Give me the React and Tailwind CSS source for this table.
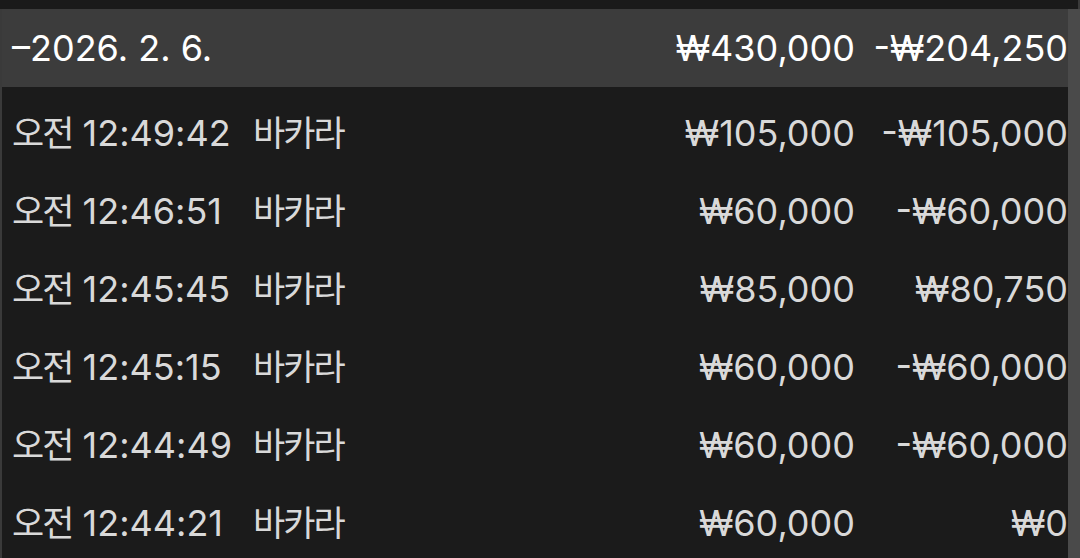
const rows = [
  { time: '12:49:42', game: '바카라', bet: '₩105,000', net: '-₩105,000' },
  { time: '12:46:51', game: '바카라', bet: '₩60,000', net: '-₩60,000' },
  { time: '12:45:45', game: '바카라', bet: '₩85,000', net: '₩80,750' },
  { time: '12:45:15', game: '바카라', bet: '₩60,000', net: '-₩60,000' },
  { time: '12:44:49', game: '바카라', bet: '₩60,000', net: '-₩60,000' },
  { time: '12:44:21', game: '바카라', bet: '₩60,000', net: '₩0' },
];

// hangul in the reference font is narrower than Noto CJK, so squeeze it a bit
function Ko({ children }) {
  return <span className="text-[35px] tracking-[-2px]">{children}</span>;
}

export default function App() {
  return (
    <div
      className="w-[1080px] h-[558px] overflow-hidden bg-[#1b1b1b] flex flex-col text-[36px]"
      style={{ fontFamily: 'Inter, "Noto Sans CJK KR", sans-serif' }}
    >
      <div className="h-[9px] shrink-0 flex">
        <div className="flex-1 bg-[#1a1a1a]" />
        <div className="w-[2px] bg-[#3a3a3a]" />
      </div>
      <div className="flex flex-1 min-h-0">
        <div className="w-[2px] bg-[#3a3a3a] shrink-0" />
        <div className="flex-1 flex flex-col min-w-0">
          <div className="h-[78px] shrink-0 bg-[#3c3c3c] flex items-center pl-[10px] text-white">
            <span className="flex-1">–2026. 2. 6.</span>
            <span className="text-right">₩430,000</span>
            <span className="w-[213px] text-right">-₩204,250</span>
          </div>
          <div className="pt-[7px] flex flex-col">
            {rows.map((r) => (
              <div key={r.time} className="h-[78px] shrink-0 flex items-center pl-[10px] text-[#d9d9d9]">
                <span className="w-[241px] whitespace-nowrap">
                  <Ko>오전</Ko> {r.time}
                </span>
                <span className="flex-1">
                  <Ko>{r.game}</Ko>
                </span>
                <span className="text-right">{r.bet}</span>
                <span className="w-[213px] text-right">{r.net}</span>
              </div>
            ))}
          </div>
        </div>
        <div className="w-[12px] shrink-0 bg-[#4a4a4a]" />
      </div>
    </div>
  );
}
